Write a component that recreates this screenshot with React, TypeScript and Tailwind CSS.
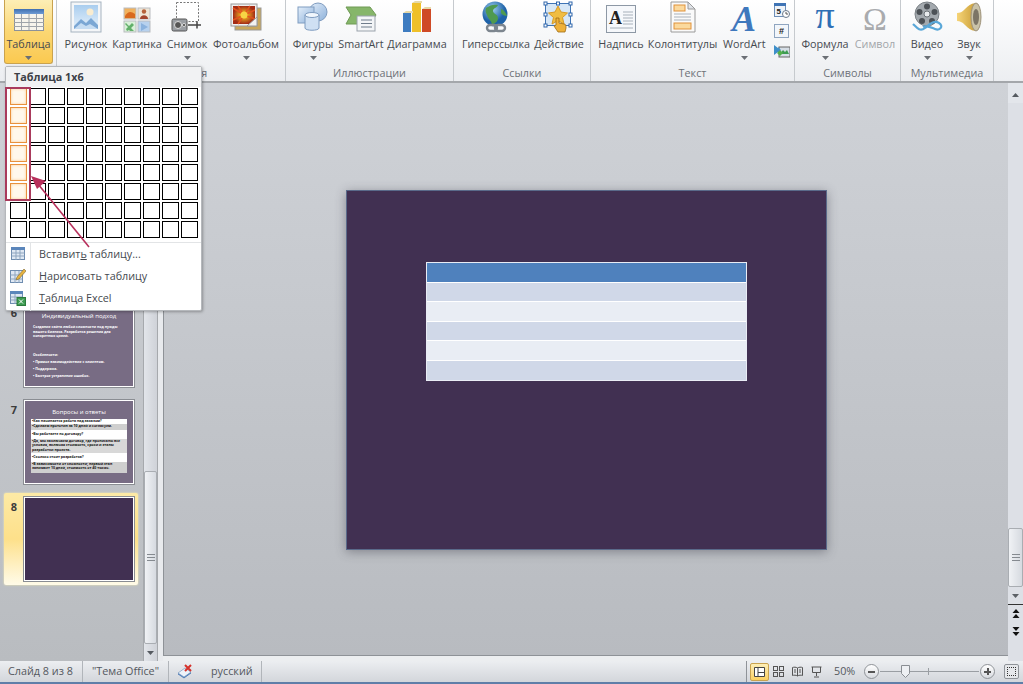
import React from "react";

const Caret = ({ c = "#6b6f75" }: { c?: string }) => (
  <svg width="7" height="4" viewBox="0 0 7 4"><path d="M0 0h7L3.500 4z" fill={c} /></svg>
);

const TableIcon = () => (
  <svg width="32" height="28" viewBox="0 0 32 28">
    <defs><linearGradient id="th" x1="0" y1="0" x2="0" y2="1"><stop offset="0" stopColor="#3f6fb0" /><stop offset="1" stopColor="#6f9bd4" /></linearGradient></defs>
    <rect x="1.500" y="4.500" width="29" height="21" fill="#f7f4ec" stroke="#8d9299" />
    <rect x="1" y="4" width="30" height="5" fill="url(#th)" />
    <path d="M1 13.500h30M1 17.500h30M1 21.500h30M8.500 9v16M16 9v16M23.500 9v16" stroke="#9fa4aa" />
  </svg>
);
const PictureIcon = () => (
  <svg width="32" height="32" viewBox="0 0 32 32">
    <defs><linearGradient id="sky" x1="0" y1="0" x2="0" y2="1"><stop offset="0" stopColor="#a9cdef" /><stop offset="1" stopColor="#e6f1fb" /></linearGradient></defs>
    <rect x="1" y="1" width="30" height="30" fill="#f4f6f8" stroke="#a6b3c0" />
    <rect x="4" y="4" width="24" height="24" fill="url(#sky)" />
    <circle cx="20" cy="11" r="3.500" fill="#f9ecd0" />
    <path d="M4 25l7-7 5 4 5-5 7 7v4H4z" fill="#7ba7d4" />
    <path d="M4 28l7-6 5 3 4-2 8 5z" fill="#c5dcf2" />
  </svg>
);
const ClipartIcon = () => (
  <svg width="28" height="28" viewBox="0 0 28 28">
    <rect x="1" y="3" width="12" height="11" fill="#f1b25e" stroke="#b9bcc0" />
    <path d="M2 11c3-5 6-5 10-2v4H2z" fill="#d9691e" />
    <rect x="15" y="3" width="12" height="11" fill="#efe6d6" stroke="#b9bcc0" />
    <circle cx="21" cy="6.500" r="2.200" fill="#b6623a" /><path d="M17 14c0-5 8-5 8 0z" fill="#a3462e" />
    <rect x="1" y="16" width="12" height="11" fill="#d9f0d8" stroke="#b9bcc0" />
    <path d="M3 18l3 3 3-3 2 2-3 3 3 3H7l-1-1-2 1-1-2 2-2-3-3z" fill="#62b06a" />
    <rect x="15" y="16" width="12" height="11" fill="#b7d1ee" stroke="#b9bcc0" />
    <path d="M18 18l7 4-7 4z" fill="#8bb2de" />
  </svg>
);
const ScreenshotIcon = () => (
  <svg width="32" height="32" viewBox="0 0 32 32">
    <rect x="5.500" y="1.500" width="22" height="19" fill="#fff" stroke="#777" strokeDasharray="2 1.500" />
    <path d="M17 24h13M26 20.500v7" stroke="#444" strokeWidth="1.500" fill="none" />
    <rect x="1" y="18" width="15" height="12" rx="1.500" fill="#9a9ea3" stroke="#555" />
    <circle cx="7" cy="24" r="3.500" fill="#555" stroke="#ddd" /><circle cx="13" cy="24" r="1.500" fill="#333" stroke="#ddd" />
  </svg>
);
const AlbumIcon = () => (
  <svg width="32" height="30" viewBox="0 0 32 30">
    <defs><radialGradient id="sun"><stop offset="0" stopColor="#f4ce3a" /><stop offset="0.3" stopColor="#eaa820" /><stop offset="1" stopColor="#a32c16" /></radialGradient></defs>
    <rect x="5" y="5" width="26" height="22" fill="#c9a75c" stroke="#9a9a9a" />
    <rect x="1" y="1" width="26" height="22" fill="#efefef" stroke="#9a9a9a" />
    <rect x="3" y="3" width="22" height="18" fill="url(#sun)" />
    <path d="M14 12L3 5M14 12L8 3M14 12L20 3M14 12L25 7M14 12L3 17M14 12L8 21M14 12L25 16" stroke="#e2531f" strokeWidth="1.500" />
    <circle cx="14" cy="12" r="3.500" fill="#f7d544" />
    <path d="M27 14v9H17z" fill="#f2f2f2" stroke="#999" />
  </svg>
);
const ShapesIcon = () => (
  <svg width="32" height="32" viewBox="0 0 32 32">
    <defs><linearGradient id="sb" x1="0" y1="0" x2="1" y2="1"><stop offset="0" stopColor="#e3eefa" /><stop offset="1" stopColor="#8db1da" /></linearGradient></defs>
    <circle cx="21" cy="11" r="9" fill="url(#sb)" stroke="#7f9cc0" />
    <rect x="1" y="6" width="16" height="16" fill="url(#sb)" stroke="#7f9cc0" />
    <path d="M8 14v13c0 3 14 3 14 0V14z" fill="#cfe0f3" stroke="#7f9cc0" />
    <ellipse cx="15" cy="14" rx="7" ry="2.500" fill="#f1f7fd" stroke="#7f9cc0" />
  </svg>
);
const SmartArtIcon = () => (
  <svg width="32" height="30" viewBox="0 0 32 30">
    <path d="M1 4h24l6 8-6 9H1l5-9z" fill="#86b66a" stroke="#6e9a54" />
    <rect x="12" y="13" width="18" height="15" fill="#f3f5f7" stroke="#9aa2ab" />
    <path d="M16 17h11M16 20.500h11M16 24h11" stroke="#6f7c8b" />
  </svg>
);
const ChartIcon = () => (
  <svg width="30" height="32" viewBox="0 0 30 32">
    <rect x="1" y="12" width="8" height="19" fill="#3e7cc0" />
    <rect x="10" y="2" width="9" height="29" fill="#efc029" />
    <rect x="20" y="8" width="9" height="23" fill="#cf4a26" />
    <path d="M1 12l3-2h7v2zM10 2l3-2h7v2zM20 8l3-2h6v2z" fill="#e6d9a8" />
  </svg>
);
const GlobeIcon = () => (
  <svg width="32" height="32" viewBox="0 0 32 32">
    <defs><radialGradient id="gl" cx="0.4" cy="0.3"><stop offset="0" stopColor="#9fd0ef" /><stop offset="1" stopColor="#1e62a8" /></radialGradient></defs>
    <circle cx="15" cy="13" r="12.500" fill="url(#gl)" />
    <path d="M6 7c4-3 8-4 12-3-1 3-5 3-5 6s5 3 5 7-4 6-6 6c-1-4-4-5-5-9-1-2-2-4-1-7zM21 8c3 1 5 4 6 7-2 0-5-1-6-3z" fill="#4f9a4f" />
    <g fill="none" stroke="#7d868f" strokeWidth="2.400"><rect x="7" y="24" width="10" height="6" rx="3" /><rect x="15" y="24" width="10" height="6" rx="3" /></g>
  </svg>
);
const ActionIcon = () => (
  <svg width="32" height="32" viewBox="0 0 32 32">
    <rect x="2.500" y="2.500" width="25" height="22" fill="#d7e7f6" stroke="#3f74b5" />
    <path d="M15 5l3 6 6.500 1-5 4.500 1.500 6.500-6-3.500-6 3.500 1.500-6.500-5-4.500 6.500-1z" fill="#f0bd43" stroke="#d99a24" />
    <g fill="#fff" stroke="#2f66ac"><rect x="1" y="1" width="3" height="3" /><rect x="13.500" y="1" width="3" height="3" /><rect x="26" y="1" width="3" height="3" /><rect x="1" y="12" width="3" height="3" /><rect x="26" y="12" width="3" height="3" /><rect x="1" y="23" width="3" height="3" /><rect x="26" y="23" width="3" height="3" /></g>
    <path d="M13 17h3v5l5 1c2 0 2 2 2 4l-1 4h-7l-4-6 2-1z" fill="#eeb13a" stroke="#a06c14" strokeWidth="0.800" />
  </svg>
);
const TextboxIcon = () => (
  <svg width="30" height="28" viewBox="0 0 30 28">
    <rect x="0.500" y="0.500" width="29" height="27" fill="#f6f8fb" stroke="#8d98a5" />
    <text x="3" y="19" fontFamily="Liberation Serif" fontWeight="700" fontSize="18" fill="#222">A</text>
    <path d="M17 7h10M17 10h10M17 13h10M17 16h10M17 19h10M4 23h23" stroke="#a7b0ba" />
  </svg>
);
const HeaderIcon = () => (
  <svg width="26" height="32" viewBox="0 0 26 32">
    <path d="M1 1h17l7 7v23H1z" fill="#fafafa" stroke="#9a9a9a" />
    <rect x="4" y="4" width="11" height="6" fill="#fbd99d" stroke="#e0923a" />
    <rect x="4" y="22" width="17" height="6" fill="#fbd99d" stroke="#e0923a" />
    <path d="M4 13h17M4 16h17M4 19h17" stroke="#aab2bb" />
    <path d="M18 1v7h7z" fill="#dfe3e8" stroke="#9a9a9a" />
  </svg>
);
const WordArtIcon = () => (
  <svg className="overflow-visible" width="30" height="30" viewBox="0 0 30 30">
    <text x="15" y="28" textAnchor="middle" fontFamily="Liberation Serif" fontStyle="italic" fontWeight="700" fontSize="36" fill="#3f78bd">A</text>
  </svg>
);
const PiIcon = () => (
  <svg className="overflow-visible" width="30" height="30" viewBox="0 0 30 30">
    <text x="15" y="25" textAnchor="middle" fontFamily="Liberation Serif" fontSize="38" fill="#2f6fb5">π</text>
  </svg>
);
const OmegaIcon = () => (
  <svg className="overflow-visible" width="30" height="28" viewBox="0 0 30 28">
    <text x="15" y="25" textAnchor="middle" fontFamily="Liberation Serif" fontSize="32" fill="#a9abae">Ω</text>
  </svg>
);
const DateIcon = () => (
  <svg width="16" height="16" viewBox="0 0 16 16">
    <rect x="0.500" y="1.500" width="11" height="13" fill="#eef3f9" stroke="#6d8fb8" />
    <rect x="0" y="1" width="12" height="3" fill="#3f74b5" />
    <text x="2.500" y="12" fontFamily="Liberation Sans" fontWeight="700" fontSize="8" fill="#222">5</text>
    <circle cx="12" cy="12" r="3.500" fill="#fff" stroke="#6b7b8c" /><path d="M12 10v2h2" stroke="#555" fill="none" />
  </svg>
);
const HashIcon = () => (
  <div className="flex h-[14px] w-[15px] items-center justify-center border border-[#8fa5c0] bg-[#f2f6fb] text-[9px] font-bold leading-none text-[#222] font-['Liberation_Sans',sans-serif]">#</div>
);
const ObjectIcon = () => (
  <svg width="16" height="14" viewBox="0 0 16 14">
    <rect x="5" y="3" width="11" height="10" fill="#d6dee6" stroke="#666" />
    <path d="M6 10l3-4 2 2 2-2 2 4z" fill="#3e9c52" />
    <path d="M0 1l4 3v-1l3 3-3 3V8L0 11z" fill="#3f8fc9" />
    <path d="M3 9l3-3 3 3-3 3z" fill="#54b04a" />
  </svg>
);
const VideoIcon = () => (
  <svg width="32" height="32" viewBox="0 0 32 32">
    <circle cx="16" cy="13" r="12" fill="#a3a9ae" stroke="#7c8287" />
    <circle cx="16" cy="13" r="3" fill="#e9ecee" stroke="#6c7277" />
    <g fill="#4d5257"><circle cx="16" cy="5.500" r="3" /><circle cx="23.500" cy="11" r="3" /><circle cx="8.500" cy="11" r="3" /><circle cx="11" cy="20" r="3" /><circle cx="21" cy="20" r="3" /></g>
    <path d="M2 23c4 4 7 8 12 4s9-8 14-5 1 8-4 6-8-4-12-2" fill="none" stroke="#5aa7d8" strokeWidth="2.200" />
  </svg>
);
const SoundIcon = () => (
  <svg width="26" height="32" viewBox="0 0 26 32">
    <defs><linearGradient id="sp" x1="0" y1="0" x2="1" y2="0"><stop offset="0" stopColor="#f6d477" /><stop offset="1" stopColor="#c79b34" /></linearGradient></defs>
    <path d="M1 12c3 0 5-1 8-4 4-4 8-7 12-5v26c-4 2-8-1-12-5-3-3-5-4-8-4z" fill="url(#sp)" />
    <ellipse cx="20" cy="16" rx="5" ry="14" fill="#c9c2a8" stroke="#9e927a" />
    <ellipse cx="20" cy="16" rx="3" ry="8" fill="#7c7566" />
  </svg>
);

const RBtn = ({ w, label, icon, caret, disabled }: { w: string; label: string; icon: React.ReactNode; caret?: boolean; disabled?: boolean }) => (
  <div className={`flex flex-col items-center ${w}`}>
    <div className="flex h-[33px] items-end">{icon}</div>
    <div className={`mt-[3px] h-[15px] whitespace-nowrap text-[10.800px] leading-[15px] ${disabled ? "text-[#a2a5a9]" : "text-[#464a50]"}`}>{label}</div>
    {caret && <div className="mt-[4px] flex h-[6px] items-center"><Caret /></div>}
  </div>
);

const Group = ({ w, pl, label, children }: { w: string; pl: string; label?: string; children: React.ReactNode }) => (
  <div className={`flex h-full shrink-0 flex-col border-r border-r-[#c6cace] ${w}`}>
    <div className={`flex h-[66px] items-start ${pl}`}>{children}</div>
    <div className="h-[16px] text-center text-[10.800px] leading-[16px] text-[#6d7278]">{label}</div>
  </div>
);

const ThumbRow = ({ n, active, children }: { n: number; active?: boolean; children: React.ReactNode }) => (
  <div className={`ml-[4px] mr-[5px] flex h-[92px] items-center rounded-[2px] ${active ? "bg-gradient-to-b from-[#fdeaa5] via-[#fde08a] to-[#fffbe8] shadow-[0_0_2px_#fff3b0]" : ""}`}>
    <div className="flex h-[84px] w-[20px] items-start justify-center pt-[3px] text-[11px] font-bold leading-[14px] text-[#3c3c3c]">{n}</div>
    <div className="h-[84px] w-[110px] overflow-hidden border border-white shadow-[0_0_0_1px_#8a8d92]">{children}</div>
  </div>
);

const Cell = ({ on }: { on?: boolean }) => (
  <div className={`h-[17px] w-[17px] border ${on ? "border-[#e8913c] bg-[#fff8ec] shadow-[inset_0_0_3px_#f9cd94]" : "border-black bg-white"}`} />
);

const TinyLine = ({ children, bg }: { children: React.ReactNode; bg?: string }) => (
  <div className={`text-[3.500px] font-bold leading-[4.500px] ${bg ?? ""}`}>{children}</div>
);

const cells = Array.from({ length: 80 }, (_, i) => i);

export default function App() {
  return (
    <div className="relative flex h-[684px] w-[1023px] flex-col overflow-hidden bg-[#d4d7dc] font-['Open_Sans','Noto_Sans',sans-serif]">
      {/* Ribbon */}
      <div className="flex h-[83px] shrink-0 border-b-2 border-b-[#a4a7ab] bg-gradient-to-b from-white to-[#eceef1]">
        <Group w="w-[57px]" pl="pl-[4px]">
          <div className="flex h-[64px] w-[49px] flex-col items-center rounded-b-[3px] border border-t-0 border-[#c9a24e] bg-gradient-to-b from-[#fdeeb5] via-[#fbd773] to-[#fbc94f]">
            <div className="flex h-[33px] items-end"><TableIcon /></div>
            <div className="mt-[3px] h-[15px] text-[10.800px] leading-[15px] text-[#464a50]">Таблица</div>
            <div className="mt-[4px] flex h-[6px] items-center"><Caret /></div>
          </div>
        </Group>
        <Group w="w-[229px]" pl="pl-[4px]" label="Изображения">
          <RBtn w="w-[50px]" label="Рисунок" icon={<PictureIcon />} />
          <RBtn w="w-[52px]" label="Картинка" icon={<ClipartIcon />} />
          <RBtn w="w-[48px]" label="Снимок" icon={<ScreenshotIcon />} caret />
          <RBtn w="w-[70px]" label="Фотоальбом" icon={<AlbumIcon />} caret />
        </Group>
        <Group w="w-[168px]" pl="pl-[4px]" label="Иллюстрации">
          <RBtn w="w-[46px]" label="Фигуры" icon={<ShapesIcon />} caret />
          <RBtn w="w-[50px]" label="SmartArt" icon={<SmartArtIcon />} />
          <RBtn w="w-[62px]" label="Диаграмма" icon={<ChartIcon />} />
        </Group>
        <Group w="w-[137px]" pl="pl-[5px]" label="Ссылки">
          <RBtn w="w-[74px]" label="Гиперссылка" icon={<GlobeIcon />} />
          <RBtn w="w-[52px]" label="Действие" icon={<ActionIcon />} />
        </Group>
        <Group w="w-[204px]" pl="pl-[5px]" label="Текст">
          <RBtn w="w-[50px]" label="Надпись" icon={<TextboxIcon />} />
          <RBtn w="w-[74px]" label="Колонтитулы" icon={<HeaderIcon />} />
          <RBtn w="w-[50px]" label="WordArt" icon={<WordArtIcon />} caret />
          <div className="flex w-[25px] flex-col items-center gap-[6px] pt-[2px]">
            <DateIcon />
            <HashIcon />
            <ObjectIcon />
          </div>
        </Group>
        <Group w="w-[106px]" pl="pl-[5px]" label="Символы">
          <RBtn w="w-[50px]" label="Формула" icon={<PiIcon />} caret />
          <RBtn w="w-[50px]" label="Символ" disabled icon={<OmegaIcon />} />
        </Group>
        <Group w="w-[93px]" pl="pl-[5px]" label="Мультимедиа">
          <RBtn w="w-[42px]" label="Видео" icon={<VideoIcon />} caret />
          <RBtn w="w-[42px]" label="Звук" icon={<SoundIcon />} caret />
        </Group>
        <div className="flex-1" />
      </div>

      {/* Body */}
      <div className="flex min-h-0 flex-1">
        {/* Thumbnails pane */}
        <div className="flex w-[143px] shrink-0 flex-col justify-end gap-0 bg-gradient-to-b from-[#cfd2d7] to-[#b9bcc0] pb-[76px]">
          <ThumbRow n={6}>
            <div className="h-full bg-[#786c84] px-[8px] pt-[8px] text-white">
              <div className="mb-[5px] text-center text-[6px] leading-[8px]">Индивидуальный подход</div>
              <TinyLine>Создание сайта любой сложности под нужды вашего бизнеса. Разработка решения для конкретных целей.</TinyLine>
              <div className="h-[14px]" />
              <TinyLine>Особенности:</TinyLine>
              <div className="mt-[3px] flex flex-col gap-[2.500px]">
                <TinyLine>•  Прямое взаимодействие с клиентом.</TinyLine>
                <TinyLine>•  Поддержка.</TinyLine>
                <TinyLine>•  Быстрое устранение ошибок.</TinyLine>
              </div>
            </div>
          </ThumbRow>
          <div className="h-[5px]" />
          <ThumbRow n={7}>
            <div className="h-full bg-[#786c84] pt-[7px] text-[#111]">
              <div className="mb-[3px] text-center text-[6px] leading-[8px] text-white">Вопросы и ответы</div>
              <div className="mx-[6px]">
                <div className="bg-white px-px"><TinyLine>•Как начинается работа над заказом?</TinyLine></div>
                <div className="bg-[#cfcfcf] px-px pb-[2px]"><TinyLine>•Сделаем прототип за 10 дней и согласуем.</TinyLine></div>
                <div className="bg-white px-px py-[2px]"><TinyLine>•Вы работаете по договору?</TinyLine></div>
                <div className="bg-[#d8d8d8] px-px pb-px"><TinyLine>•Да, мы заключаем договор, где прописаны все условия, включая стоимость, сроки и этапы разработки проекта.</TinyLine></div>
                <div className="bg-white px-px py-[2px]"><TinyLine>•Сколько стоит разработка?</TinyLine></div>
                <div className="bg-[#cfcfcf] px-px pb-[2px]"><TinyLine>•В зависимости от сложности; первый этап занимает 10 дней, стоимость от 40 тысяч.</TinyLine></div>
              </div>
            </div>
          </ThumbRow>
          <div className="h-[5px]" />
          <ThumbRow n={8} active>
            <div className="h-full bg-[#413052]" />
          </ThumbRow>
        </div>

        {/* Left scrollbar */}
        <div className="flex w-[15px] shrink-0 flex-col border-x border-x-[#a6a9ad] bg-gradient-to-r from-[#e2e5ea] to-[#cfd2d8]">
          <div className="flex-1" />
          <div className="flex h-[173px] items-center justify-center rounded-[2px] border border-[#a9adb2] bg-gradient-to-r from-[#f0f2f5] to-[#d6dae0]">
            <div className="h-[7px] w-[8px] border-y border-[#858a90] bg-[linear-gradient(#858a90,#858a90)] bg-[length:100%_1px] bg-center bg-no-repeat" />
          </div>
          <div className="flex h-[17px] items-center justify-center"><Caret c="#555a60" /></div>
        </div>
        <div className="w-[5px] shrink-0 bg-[#e8eaed]" />

        {/* Main area */}
        <div className="flex min-w-0 flex-1 flex-col">
          <div className="flex min-h-0 flex-1 items-center justify-center border-b border-l border-[#8e9297] bg-gradient-to-b from-[#cfd2d7] to-[#b8bbc0] pl-[1px] pt-[1px]">
            <div className="h-[360px] w-[481px] border border-[#5a6a8a] bg-[#413052] pt-[71px] shadow-[0_2px_10px_rgba(60,60,70,0.45)]">
              <div className="mx-auto flex w-[321px] flex-col gap-px border border-[#e9ecf5] bg-white">
                <div className="h-[19px] bg-[#4f81bd]" />
                <div className="h-[18px] bg-[#d0d8e8]" />
                <div className="h-[19px] bg-[#e9edf4]" />
                <div className="h-[18px] bg-[#d0d8e8]" />
                <div className="h-[19px] bg-[#e9edf4]" />
                <div className="h-[19px] bg-[#d0d8e8]" />
              </div>
            </div>
          </div>
          <div className="h-[5px] shrink-0 bg-[#eceef0]" />
        </div>

        {/* Right scrollbar */}
        <div className="flex w-[15px] shrink-0 flex-col items-center bg-[#dde0e6]">
          <div className="flex h-[20px] w-full items-center justify-center bg-[#e3e6eb] pt-[4px]"><div className="rotate-180"><Caret c="#555a60" /></div></div>
          <div className="flex-1" />
          <div className="flex h-[59px] w-full items-center justify-center rounded-[2px] border border-[#a9adb2] bg-gradient-to-r from-[#f0f2f5] to-[#d6dae0]">
            <div className="h-[7px] w-[8px] border-y border-[#858a90] bg-[linear-gradient(#858a90,#858a90)] bg-[length:100%_1px] bg-center bg-no-repeat" />
          </div>
          <div className="flex h-[17px] w-full items-center justify-center"><Caret c="#5c6166" /></div>
          <div className="h-px w-full bg-[#333]" />
          <div className="flex h-[17px] items-center justify-center">
            <svg width="8" height="10" viewBox="0 0 8 10"><path d="M4 0l3.500 4H.5zM4 5l3.500 4H.5z" fill="#111" /></svg>
          </div>
          <div className="flex h-[17px] items-center justify-center">
            <svg width="8" height="10" viewBox="0 0 8 10"><path d="M.5 1h7L4 5zM.5 6h7L4 10z" fill="#111" /></svg>
          </div>
          <div className="h-[22px]" />
        </div>
      </div>

      {/* Status bar */}
      <div className="flex h-[23px] shrink-0 items-center border-b-2 border-b-[#5f7ea8] bg-gradient-to-b from-[#eceef1] to-[#d3d6db] text-[10.800px] text-[#54585e]">
        <div className="flex h-full w-[83px] items-center border-r border-r-[#b1b5ba] pl-[8px]">Слайд 8 из 8</div>
        <div className="flex h-full w-[86px] items-center border-r border-r-[#b1b5ba] pl-[9px]">"Тема Office"</div>
        <div className="flex h-full w-[93px] items-center border-r border-r-[#b1b5ba] pl-[8px]">
          <svg width="17" height="16" viewBox="0 0 17 16">
            <path d="M1 10l7-5 6 4-7 5z" fill="#5c8fd0" stroke="#2f5f9f" strokeWidth="0.600" />
            <path d="M1 9l7-5 6 4-7 5z" fill="#eef3f9" stroke="#6c8fb8" strokeWidth="0.600" />
            <path d="M8 1l6 6M14 1L8 7" stroke="#d5322c" strokeWidth="2" />
          </svg>
          <span className="ml-[17px]">русский</span>
        </div>
        <div className="flex-1 self-stretch border-r border-r-[#8f9398]" />
        <div className="flex h-full items-center pl-[3px]">
          <div className="flex h-[18px] w-[19px] items-center justify-center rounded-[2px] border border-[#c9a24e] bg-gradient-to-b from-[#fdeeb5] to-[#fbd060]">
            <svg width="11" height="10" viewBox="0 0 11 10"><path d="M.5.5h10v9H.5zM4 .5v9M4 5.500h6.500" stroke="#444" fill="#fff" /></svg>
          </div>
          <div className="flex w-[19px] justify-center">
            <svg width="11" height="11" viewBox="0 0 11 11" fill="none" stroke="#555"><rect x=".5" y=".5" width="4" height="4" /><rect x="6.500" y=".5" width="4" height="4" /><rect x=".5" y="6.500" width="4" height="4" /><rect x="6.500" y="6.500" width="4" height="4" /></svg>
          </div>
          <div className="flex w-[19px] justify-center">
            <svg width="11" height="11" viewBox="0 0 11 11" fill="none" stroke="#555"><path d="M5.500 2C4 1 2 1 .5 1.500v8C2 9 4 9 5.500 10 7 9 9 9 10.500 9.500v-8C9 1 7 1 5.500 2zM5.500 2v8M2 4h2M2 6h2M7 4h2M7 6h2" /></svg>
          </div>
          <div className="flex w-[19px] justify-center">
            <svg width="11" height="12" viewBox="0 0 11 12" fill="none" stroke="#555"><path d="M.5 1h10M1.500 1v5.500h8V1M5.500 6.500V10M3 11h5" /></svg>
          </div>
          <span className="ml-[8px] w-[30px]">50%</span>
          <div className="flex h-[15px] w-[15px] items-center justify-center rounded-full border border-[#8f9398] bg-gradient-to-b from-white to-[#d8dbe0]"><div className="h-[2px] w-[7px] bg-[#555]" /></div>
          <div className="relative mx-px h-[1px] w-[99px] bg-[#9a9ea3]">
            <div className="absolute left-[48px] top-[-3px] h-[7px] w-px bg-[#9a9ea3]" />
            <svg className="absolute left-[21px] top-[-6px]" width="9" height="13" viewBox="0 0 9 13"><path d="M.5.500h8v8L4.500 12.500.5 8.500z" fill="#eef0f3" stroke="#8a8e93" /></svg>
          </div>
          <div className="relative flex h-[15px] w-[15px] items-center justify-center rounded-full border border-[#8f9398] bg-gradient-to-b from-white to-[#d8dbe0]">
            <div className="h-[2px] w-[7px] bg-[#555]" />
            <div className="absolute h-[7px] w-[2px] bg-[#555]" />
          </div>
          <div className="ml-[9px] mr-[4px] flex h-[15px] w-[15px] items-center justify-center rounded-[2px] border border-[#8f9398] bg-[#e6e8eb]">
            <div className="h-[9px] w-[9px] border border-dotted border-[#333]" />
          </div>
        </div>
      </div>

      {/* Dropdown menu */}
      <div className="absolute left-[5px] top-[66px] h-[245px] w-[197px] rounded-[2px] border border-[#b5b8bc] bg-white shadow-[1px_1px_3px_rgba(0,0,0,0.3)]">
        <div className="h-[20px] bg-[#f1f2f3] pl-[8px] text-[10.800px] font-bold leading-[20px] text-[#3c4046]">Таблица 1х6</div>
        <div className="grid grid-cols-[repeat(10,17px)] gap-x-[2px] gap-y-[2px] pl-[4px] pt-[1px]">
          {cells.map((i) => (
            <Cell key={i} on={i % 10 === 0 && i < 60} />
          ))}
        </div>
        <div className="mt-[4px] border-t border-t-[#e2e4e6]" />
        <div className="flex h-[68px]">
          <div className="flex w-[25px] flex-col items-center justify-between border-r border-r-[#e2e4e6] pb-[5px] pt-[4px]">
            <svg width="14" height="13" viewBox="0 0 14 13"><rect x=".5" y=".5" width="13" height="12" fill="#dfe8f3" stroke="#6f8db0" /><rect width="14" height="3" fill="#5b86bb" /><path d="M.5 6h13M.5 9h13M5 3v10M9 3v10" stroke="#8ea5bf" /></svg>
            <svg width="16" height="15" viewBox="0 0 16 15"><rect x=".5" y="2.500" width="12" height="12" fill="#dfe8f3" stroke="#6f8db0" /><path d="M.5 7h12M.5 11h12M5 3v12M9 3v12" stroke="#8ea5bf" /><path d="M7 9l7-8 2 2-7 8-3 1z" fill="#e6b23f" stroke="#7c6a35" strokeWidth="0.600" /></svg>
            <svg width="16" height="15" viewBox="0 0 16 15"><rect x=".5" y=".5" width="12" height="12" fill="#dfe8f3" stroke="#6f8db0" /><rect width="13" height="3" fill="#5b86bb" /><path d="M.5 6h12M.5 9h12M5 3v10" stroke="#8ea5bf" /><rect x="7" y="6.500" width="8.500" height="8" fill="#3e9c52" stroke="#2b7a3c" /><path d="M9 8.500l4 4M13 8.500l-4 4" stroke="#fff" /></svg>
          </div>
          <div className="flex flex-1 flex-col gap-[7px] pl-[8px] pt-[3px] text-[10.800px] leading-[15px] text-[#464a50]">
            <div>Вставит<span className="underline">ь</span> таблицу...</div>
            <div><span className="underline">Н</span>арисовать таблицу</div>
            <div><span className="underline">Т</span>аблица Excel</div>
          </div>
        </div>
      </div>

      {/* Annotation: red frame and arrow */}
      <div className="absolute left-[5px] top-[87px] h-[114px] w-[26px] border-2 border-[#a93a5c]" />
      <svg className="absolute left-[25px] top-[170px]" width="70" height="82" viewBox="0 0 70 82">
        <path d="M64 77L13 14" stroke="#b8305c" strokeWidth="1.600" fill="none" />
        <path d="M6 6l15 5-9 8z" fill="#b8305c" />
      </svg>
    </div>
  );
}
